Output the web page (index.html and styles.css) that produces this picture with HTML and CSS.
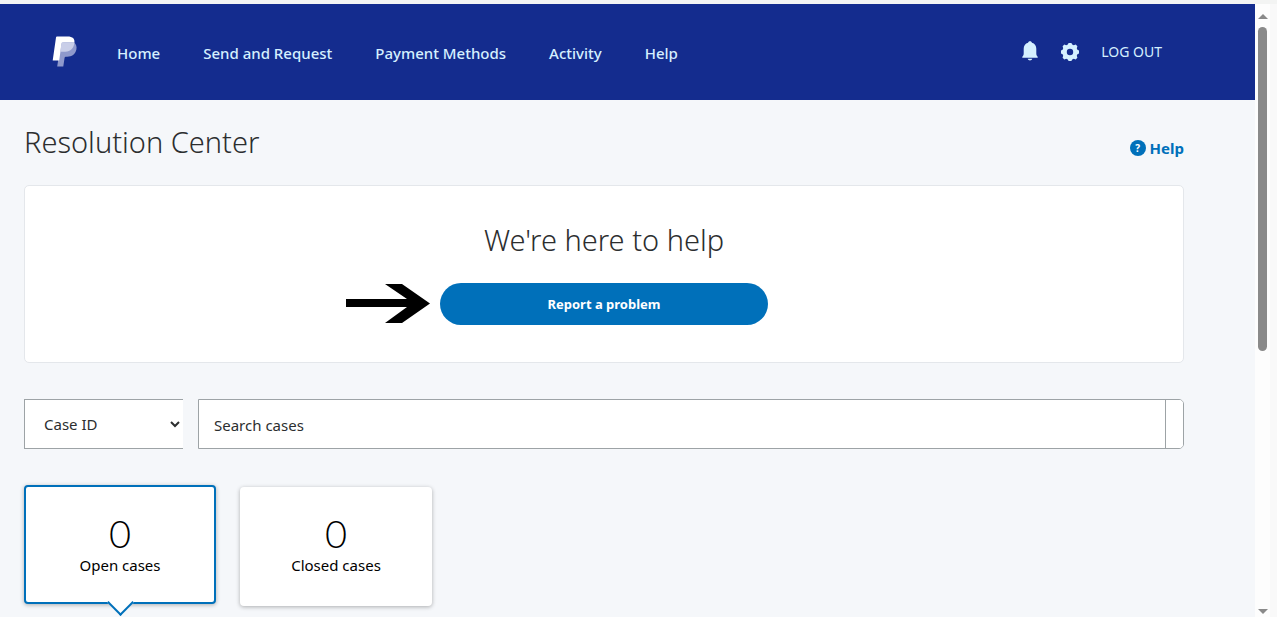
FILE: index.html
```html
<!DOCTYPE html>
<html lang="en">
    <head>
        <meta charset="utf-8">
        <meta name="viewport" content="width=device-width, initial-scale=1">
        <title>Resolution Center</title>
        <link rel="stylesheet" href="styles.css">
    </head>
    <body>
        <header class="top_bar">
            <a class="logo" href="#" aria-label="PayPal">
                <svg width="26" height="32" viewBox="0 0 26 32">
                    <path fill="#8f99cc" d="M21.500 6c2.500 1.600 3.600 4.300 2.900 7.600-1.200 5-4.600 7.200-9.100 7.200h-1.500c-.7 0-1.100.4-1.200 1l-1.300 8.700H5.200L9 6z"/>
                    <path fill="#fff" d="M5 .5h10.500c5.200 0 7.400 2.100 6.900 6.300-3-.9-6-.5-10.700-.5-1.200 0-2 .7-2.200 1.700L7.200 24.500H.7L4 1.500c.1-.6.4-1 1-1z"/>
                    <path fill="#c9cee8" d="M10.700 6.300h9c1.300 0 2.100.1 2.700.5-.7 5.700-3.700 8.900-9.100 8.900H8.200l1.200-8c.2-.9.500-1.400 1.300-1.400z"/>
                </svg>
            </a>
            <nav class="main_nav">
                <a href="#">Home</a>
                <a href="#">Send and Request</a>
                <a href="#">Payment Methods</a>
                <a href="#">Activity</a>
                <a href="#">Help</a>
            </nav>
            <div class="account_nav">
                <a href="#" aria-label="Notifications">
                    <svg width="18" height="22" viewBox="0 0 18 22">
                        <path d="M9 .3c1.100 0 1.700.6 1.900 1.400 2.900.8 4.400 3 4.400 6v4.600c0 1.700.4 2.700 1.400 3.500v1H1.300v-1c1-.8 1.400-1.800 1.400-3.500V7.700c0-3 1.500-5.200 4.400-6C7.300.9 7.900.3 9 .3zM6.700 17.800h4.600c-.3 1.100-1.200 1.700-2.300 1.700s-2-.6-2.300-1.700z"/>
                    </svg>
                </a>
                <a href="#" aria-label="Settings">
                    <svg width="18" height="18" viewBox="0 0 18 18">
                        <path fill-rule="evenodd" d="M7.600 0h2.800l.8 1.600 1.600.6 1.900-.6 1.700 1.700-.6 1.900.6 1.600 1.600.8v2.800l-1.600.8-.6 1.600.6 1.900-1.700 1.700-1.900-.6-1.600.6-.8 1.600H7.600l-.8-1.600-1.600-.6-1.900.6-1.700-1.700.6-1.900-.6-1.600L0 10.400V7.600l1.600-.8.6-1.600-.6-1.900 1.700-1.700 1.900.6 1.600-.6zM9 5.800a3.200 3.200 0 1 0 0 6.400 3.200 3.200 0 0 0 0-6.400z"/>
                    </svg>
                </a>
                <a class="logout" href="#">LOG OUT</a>
            </div>
        </header>

        <main>
            <div class="title_row">
                <h1>Resolution Center</h1>
                <a class="help_link" href="#"><span class="help_icon">?</span>Help</a>
            </div>

            <section class="report_box">
                <h2>We're here to help</h2>
                <div class="report_action">
                    <svg class="arrow" width="84" height="40" viewBox="0 0 84 40">
                        <path d="M0 16h61L39 1h17l28 19.500L56 40H39l22-16H0z"/>
                    </svg>
                    <button class="report" type="button">Report a problem</button>
                </div>
            </section>

            <form class="search_row">
                <select class="search_type" aria-label="Search by">
                    <option>Case ID</option>
                    <option>Transaction ID</option>
                </select>
                <div class="search_box">
                    <input type="text" placeholder="Search cases" aria-label="Search cases">
                    <button type="button" aria-label="Search"></button>
                </div>
            </form>

            <div class="cases">
                <button class="case_card active" type="button">
                    <span class="count">0</span>
                    <span>Open cases</span>
                </button>
                <button class="case_card" type="button">
                    <span class="count">0</span>
                    <span>Closed cases</span>
                </button>
            </div>
        </main>

        <div class="scroll_track" aria-hidden="true">
            <i class="up"></i>
            <i class="thumb"></i>
            <i class="down"></i>
        </div>
    </body>
</html>
```

FILE: styles.css
```css
*{
    box-sizing: border-box;
}
body{
    margin: 0;
    padding-right: 22px;
    border-top: 4px solid #f3f4f3;
    background: #f5f7fa;
    color: #2c2e2f;
    font-family: "Noto Sans", "Open Sans", sans-serif;
    font-size: 15px;
    line-height: 20px;
}
a{
    text-decoration: none;
}
button, input, select{
    font: inherit;
    color: inherit;
}

/* header */
.top_bar{
    display: flex;
    align-items: center;
    height: 96px;
    padding: 0 93px 0 52px;
    background: #142c8e;
}
.top_bar a{
    color: #d5f0ff;
}
.top_bar svg{
    display: block;
    fill: #d5f0ff;
}
.main_nav{
    display: flex;
    gap: 43px;
    margin-left: 39px;
    padding-top: 2px;
    font-weight: 500;
}
.account_nav{
    display: flex;
    align-items: center;
    gap: 22px;
    margin-left: auto;
}
.logout{
    font-size: 14px;
}

/* content */
main{
    padding: 24px 71px 11px 24px;
}
.title_row{
    display: flex;
    justify-content: space-between;
    align-items: center;
    height: 36px;
    margin-bottom: 25px;
}
h1, h2{
    margin: 0;
    font-size: 29px;
    font-weight: 300;
    line-height: 36px;
}
.help_link{
    display: flex;
    align-items: center;
    gap: 4px;
    padding-top: 12px;
    color: #0070ba;
    font-weight: 700;
}
.help_icon{
    width: 16px;
    height: 16px;
    border-radius: 50%;
    background: #0070ba;
    color: #fff;
    font-size: 10px;
    line-height: 16px;
    text-align: center;
}
.report_box{
    padding: 36px 24px 37px;
    border: 1px solid #e4e7eb;
    border-radius: 5px;
    background: #fff;
    text-align: center;
}
.report_action{
    position: relative;
    width: 328px;
    max-width: 100%;
    margin: 25px auto 0;
}
/* pointer that sits beside the button */
.arrow{
    position: absolute;
    top: 0;
    right: 100%;
    margin-right: 10px;
}
.report{
    display: block;
    width: 100%;
    height: 42px;
    border: none;
    border-radius: 21px;
    background: #0070ba;
    color: #fff;
    font-size: 13px;
    font-weight: 700;
    cursor: pointer;
}

/* search */
.search_row{
    display: flex;
    gap: 15px;
    height: 50px;
    margin: 36px 0;
}
.search_type{
    width: 159px;
    padding: 0 0 0 15px;
    border: 1px solid #9da3a6;
    border-right: none;
    border-radius: 0;
    background: #fff;
}
.search_box{
    display: flex;
    flex: 1;
    border: 1px solid #9da3a6;
    border-radius: 0 5px 5px 0;
    background: #fff;
    overflow: hidden;
}
.search_box input{
    flex: 1;
    min-width: 0;
    padding: 2px 15px 0;
    border: none;
    outline: none;
    background: none;
}
.search_box input::placeholder{
    color: #2c2e2f;
    opacity: 1;
}
.search_box button{
    width: 18px;
    padding: 0;
    border: none;
    border-left: 1px solid #9da3a6;
    background: #fff;
}

/* case counters */
.cases{
    display: flex;
    gap: 24px;
}
.case_card{
    position: relative;
    display: flex;
    flex-direction: column;
    align-items: center;
    justify-content: center;
    width: 192px;
    height: 119px;
    margin-top: 2px;
    padding: 0 0 8px;
    border: none;
    border-radius: 4px;
    background: #fff;
    box-shadow: 0 1px 4px rgba(0, 0, 0, 0.3);
    color: #000;
    cursor: pointer;
}
.case_card.active{
    margin-top: 0;
    padding: 0 0 4px;
    border: 2px solid #0070ba;
}
.case_card.active::after{
    content: "";
    position: absolute;
    bottom: -10px;
    left: 50%;
    width: 17px;
    height: 17px;
    margin-left: -9px;
    border: solid #0070ba;
    border-width: 0 2px 2px 0;
    background: #fff;
    transform: rotate(45deg);
}
.count{
    font-family: Lato, "Noto Sans", sans-serif;
    font-size: 38px;
    font-weight: 300;
    line-height: 44px;
}

/* scrollbar */
.scroll_track{
    position: fixed;
    top: 4px;
    right: 0;
    bottom: 0;
    display: flex;
    flex-direction: column;
    align-items: center;
    width: 22px;
    padding: 10px 0 3px;
    border-right: 7px solid #f9f9f9;
    background: #fdfdfd;
}
.up, .down{
    border: 5px solid transparent;
}
.up{
    border-top: none;
    border-bottom-color: #8a8a8a;
}
.down{
    margin-top: auto;
    border-bottom: none;
    border-top-color: #8a8a8a;
}
.thumb{
    width: 9px;
    height: 54%;
    margin-top: 8px;
    border-radius: 5px;
    background: #8a8a8a;
}
```
